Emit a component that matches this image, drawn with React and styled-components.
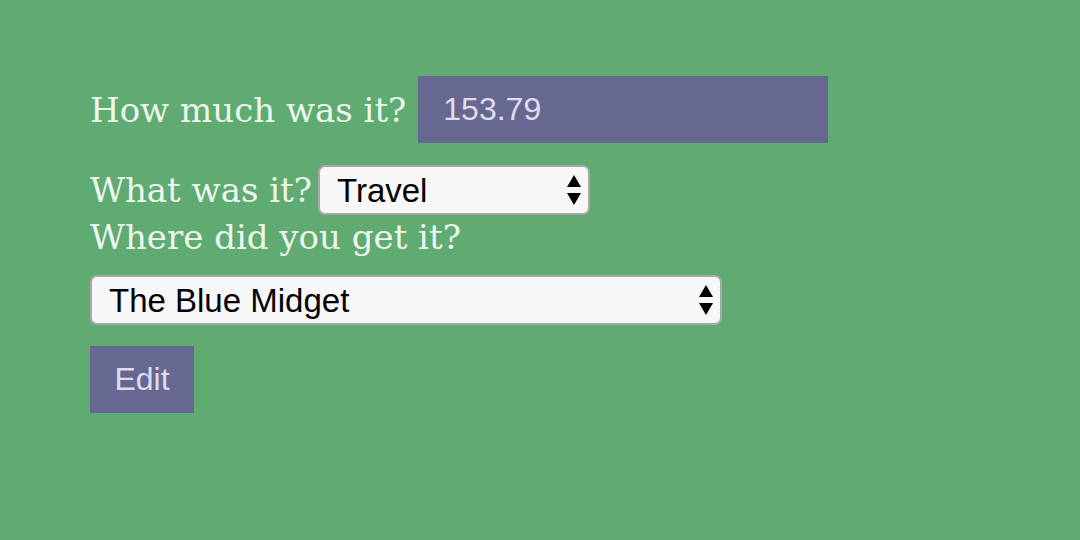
import React, { useState } from 'react';
import styled, { createGlobalStyle } from 'styled-components';

const GlobalStyle = createGlobalStyle`
  html, body {
    margin: 0;
    padding: 0;
    background: #5fab72;
  }
  body {
    width: 1080px;
    height: 540px;
    overflow: hidden;
  }
`;

const Page = styled.div`
  padding: 76px 90px 0;
`;

const Form = styled.form`
  display: flex;
  flex-direction: column;
  align-items: flex-start;
`;

const Row = styled.div`
  display: flex;
  align-items: center;
  margin-bottom: ${props => props.gap || 0}px;
`;

const Label = styled.label`
  font-family: "DejaVu Serif", "Liberation Serif", serif;
  font-size: 34px;
  color: #eef7ee;
  margin-right: ${props => props.space || 12}px;
  line-height: 44px;
  white-space: nowrap;
`;

const AmountInput = styled.input`
  box-sizing: border-box;
  width: 410px;
  height: 67px;
  border: none;
  outline: none;
  background: #666892;
  color: #e0dcec;
  font-family: "Liberation Sans", Arial, sans-serif;
  font-size: 32px;
  padding: 0 25px;
`;

const SelectWrap = styled.div`
  position: relative;
  width: ${props => props.width}px;
`;

const Select = styled.select`
  box-sizing: border-box;
  width: 100%;
  height: 50px;
  appearance: none;
  -webkit-appearance: none;
  background: #f7f7f7;
  border: 2px solid #a9a9a9;
  border-radius: 7px;
  color: #000;
  font-family: "Liberation Sans", Arial, sans-serif;
  font-size: 33px;
  padding: 0 40px 0 17px;
  outline: none;
`;

const Arrows = styled.svg`
  position: absolute;
  right: 8px;
  top: 50%;
  transform: translateY(-50%);
  pointer-events: none;
`;

const EditButton = styled.button`
  width: 104px;
  height: 67px;
  border: none;
  background: #666892;
  color: #dcdcec;
  font-family: "Liberation Sans", Arial, sans-serif;
  font-size: 32px;
  padding: 0;
  cursor: pointer;
`;

const SelectArrows = () => (
  <Arrows width="16" height="34" viewBox="0 0 16 34">
    <path d="M8 2 L15 14 L1 14 Z" fill="#000" />
    <path d="M1 20 L15 20 L8 32 Z" fill="#000" />
  </Arrows>
);

const Dropdown = ({ width, value, onChange, options }) => (
  <SelectWrap width={width}>
    <Select value={value} onChange={onChange}>
      {options.map(o => (
        <option key={o} value={o}>{o}</option>
      ))}
    </Select>
    <SelectArrows />
  </SelectWrap>
);

const App = () => {
  const [amount, setAmount] = useState('153.79');
  const [category, setCategory] = useState('Travel');
  const [place, setPlace] = useState('The Blue Midget');

  return (
    <Page>
      <GlobalStyle />
      <Form onSubmit={e => e.preventDefault()}>
        <Row gap={22}>
          <Label>How much was it?</Label>
          <AmountInput value={amount} onChange={e => setAmount(e.target.value)} />
        </Row>
        <Row>
          <Label space={6}>What was it?</Label>
          <Dropdown
            width={272}
            value={category}
            onChange={e => setCategory(e.target.value)}
            options={['Food', 'Travel', 'Entertainment', 'Bills']}
          />
        </Row>
        <Row gap={16}>
          <Label>Where did you get it?</Label>
        </Row>
        <Row gap={21}>
          <Dropdown
            width={632}
            value={place}
            onChange={e => setPlace(e.target.value)}
            options={['The Blue Midget', 'Starbug', 'Red Dwarf']}
          />
        </Row>
        <EditButton type="submit">Edit</EditButton>
      </Form>
    </Page>
  );
};

export default App;
